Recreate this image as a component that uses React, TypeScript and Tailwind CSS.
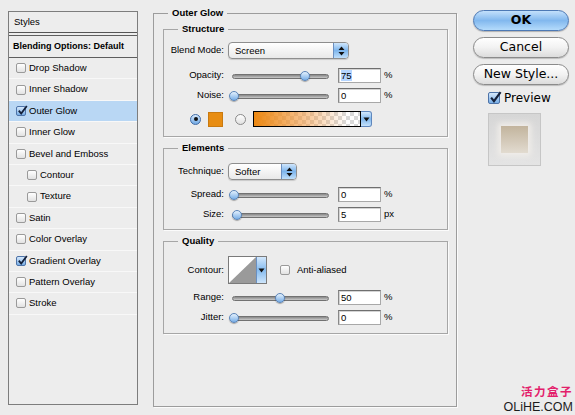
import React from "react";

function Check({ checked, big }: { checked?: boolean; big?: boolean }) {
  const size = big ? "w-[12px] h-[12px]" : "w-[10px] h-[10px]";
  if (checked) {
    return (
      <div className={`${size} shrink-0 rounded-[2px] border border-[#4d73a8] bg-linear-to-b from-[#d5e8fb] to-[#78aee6] relative`}>
        <svg width={big ? 13 : 11} height={big ? 13 : 11} viewBox="0 0 11 11" className="absolute -top-[2px] left-0">
          <path d="M1.8 5.6 L4.2 8.6 L9.8 1" fill="none" stroke="#14203a" strokeWidth="1.8" />
        </svg>
      </div>
    );
  }
  return <div className={`${size} shrink-0 rounded-[2px] border border-[#9a9a9a] bg-linear-to-b from-white to-[#e2e2e2]`} />;
}

function Radio({ on }: { on?: boolean }) {
  return on ? (
    <div className="w-[11px] h-[11px] shrink-0 rounded-full border border-[#3f6aa5] bg-linear-to-b from-[#d7eafc] to-[#6ea7e3] flex items-center justify-center">
      <div className="w-[4px] h-[4px] rounded-full bg-[#111]" />
    </div>
  ) : (
    <div className="w-[11px] h-[11px] shrink-0 rounded-full border border-[#8a8a8a] bg-linear-to-b from-white to-[#e0e0e0]" />
  );
}

function Slider({ x }: { x: number }) {
  return (
    <div className="relative w-[100px] h-[10px] shrink-0">
      <div className="absolute left-[3px] right-0 top-[3px] h-[5px] rounded-full border border-[#727272] bg-linear-to-b from-[#888888] to-[#c9c9c9]" />
      <div
        className="absolute top-0 w-[10px] h-[10px] rounded-full border border-[#5b85b9] bg-linear-to-b from-[#e4f1fd] to-[#78aee6] shadow-[0_1px_1px_rgba(0,0,0,0.3)]"
        style={{ left: x }}
      />
    </div>
  );
}

function Field({ v, sel }: { v: string; sel?: boolean }) {
  return (
    <div className="w-[43px] h-[15px] shrink-0 bg-white border border-[#a8a8a8] border-t-[#6f6f6f] border-l-[#888888] shadow-[inset_1px_1px_0_#d4d4d4] pl-[2px] flex items-center text-[9.5px] leading-[11px]">
      <span className={sel ? "bg-[#b5d5ff]" : ""}>{v}</span>
    </div>
  );
}

function UpDown() {
  return (
    <svg width="7" height="10" viewBox="0 0 7 10">
      <path d="M3.5 0.5 L6.5 4 L0.5 4 Z M0.5 6 L6.5 6 L3.5 9.5 Z" fill="#111" />
    </svg>
  );
}

function Down() {
  return (
    <svg width="7" height="5" viewBox="0 0 7 5">
      <path d="M0.5 0.5 L6.5 0.5 L3.5 4.5 Z" fill="#111" />
    </svg>
  );
}

function Popup({ w, text }: { w: string; text: string }) {
  return (
    <div className={`${w} h-[17px] shrink-0 flex rounded-[4px] border border-[#8e8e8e] bg-linear-to-b from-white to-[#e9e9e9] shadow-[0_1px_1px_rgba(0,0,0,0.15)]`}>
      <span className="flex-1 pl-[6px] text-[9.5px] leading-[15px]">{text}</span>
      <div className="w-[15px] rounded-r-[3px] border-l border-[#6b8fc0] bg-linear-to-b from-[#cfe6fc] via-[#7db5ec] to-[#bfdffb] flex items-center justify-center">
        <UpDown />
      </div>
    </div>
  );
}

function Row({ label, children, className }: { label: string; children: React.ReactNode; className: string }) {
  return (
    <div className={`flex items-center ${className}`}>
      <div className="w-[60px] shrink-0 text-right text-[9.5px]">{label}</div>
      {children}
    </div>
  );
}

function Group({ title, children, className }: { title: string; children: React.ReactNode; className: string }) {
  return (
    <div className={`border border-[#a6a6a6] shadow-[1px_1px_0_#fbfbfb] ${className}`}>
      <div className="-mt-[7px] ml-[14px] w-fit bg-[#ececec] px-[4px] text-[9.5px] font-bold leading-[12px]">{title}</div>
      {children}
    </div>
  );
}

const items: { l: string; c?: boolean; sel?: boolean; ind?: boolean }[] = [
  { l: "Drop Shadow" },
  { l: "Inner Shadow" },
  { l: "Outer Glow", c: true, sel: true },
  { l: "Inner Glow" },
  { l: "Bevel and Emboss" },
  { l: "Contour", ind: true },
  { l: "Texture", ind: true },
  { l: "Satin" },
  { l: "Color Overlay" },
  { l: "Gradient Overlay", c: true },
  { l: "Pattern Overlay" },
  { l: "Stroke" },
];

function AquaButton({ label, primary }: { label: string; primary?: boolean }) {
  return (
    <div
      className={
        primary
          ? "h-[21px] rounded-full border border-[#4d79b5] bg-linear-to-b from-[#c3e0fb] via-[#82b8ee] to-[#b4dbfb] shadow-[0_1px_1px_rgba(0,0,0,0.25)] flex items-center justify-center font-['DejaVu_Sans',sans-serif] text-[12.5px] font-bold"
          : "h-[21px] rounded-full border border-[#8b8b8b] bg-linear-to-b from-white via-[#f2f2f2] to-[#dcdcdc] shadow-[0_1px_1px_rgba(0,0,0,0.2)] flex items-center justify-center font-['DejaVu_Sans',sans-serif] text-[12.5px]"
      }
    >
      {label}
    </div>
  );
}

export default function App() {
  return (
    <div className="relative w-[575px] h-[415px] overflow-hidden bg-[#ececec] text-black font-['Liberation_Sans',Arial,sans-serif] flex items-start">
      {/* Left styles list */}
      <div className="mt-[11px] ml-[8px] w-[130px] h-[394px] border border-[#7d7d7d] bg-[#ededed] flex flex-col shrink-0">
        <div className="h-[21px] border-b border-[#555] flex items-center pl-[5px] text-[9.5px]">Styles</div>
        <div className="h-[2px]" />
        <div className="h-[23px] border-t border-b border-[#5e5e5e] flex items-center pl-[4px] text-[9px] font-bold">
          Blending Options: Default
        </div>
        {items.map((it) => (
          <div
            key={it.l}
            className={`h-[21.4px] flex items-center border-b border-[#f8f8f8] text-[9.5px] ${it.ind ? "pl-[18px]" : "pl-[7px]"} ${it.sel ? "bg-[#b9d7f4]" : ""}`}
          >
            <Check checked={it.c} />
            <span className="ml-[3px]">{it.l}</span>
          </div>
        ))}
      </div>

      {/* Middle settings */}
      <div className="ml-[15px] mt-[13px] w-[304px] h-[394px] shrink-0 border border-[#9c9c9c] shadow-[1px_1px_0_#fbfbfb] pl-[9px] pr-[8px]">
        <div className="-mt-[7px] ml-[5px] w-fit bg-[#ececec] px-[4px] text-[9.5px] font-bold leading-[12px]">Outer Glow</div>

        <Group title="Structure" className="mt-[10px] pb-[9px]">
          <Row label="Blend Mode:" className="mt-[7px]">
            <div className="ml-[4px]">
              <Popup w="w-[121px]" text="Screen" />
            </div>
          </Row>
          <Row label="Opacity:" className="mt-[9px]">
            <div className="ml-[5px]">
              <Slider x={71} />
            </div>
            <div className="ml-[9px]">
              <Field v="75" sel />
            </div>
            <span className="ml-[3px] text-[9.5px]">%</span>
          </Row>
          <Row label="Noise:" className="mt-[5px]">
            <div className="ml-[5px]">
              <Slider x={0} />
            </div>
            <div className="ml-[9px]">
              <Field v="0" />
            </div>
            <span className="ml-[3px] text-[9.5px]">%</span>
          </Row>
          <div className="mt-[8px] flex items-center pl-[26px] h-[16px]">
            <Radio on />
            <div className="ml-[7px] w-[15px] h-[15px] bg-[#e88d12] border border-[#c97a10]" />
            <div className="ml-[12px]">
              <Radio />
            </div>
            <div className="ml-[7px] flex h-[16px]">
              <div className="w-[108px] h-full border border-black bg-[image:linear-gradient(90deg,#ec8812_0%,rgba(242,150,60,0.6)_45%,rgba(255,255,255,0)_88%),repeating-conic-gradient(#ffffff_0_25%,#d9d9d9_0_50%)] bg-[length:100%_100%,8px_8px]" />
              <div className="w-[11px] h-full rounded-r-[3px] border border-l-0 border-[#5f87bd] bg-linear-to-b from-[#d3e8fc] via-[#80b7ec] to-[#c6e2fb] flex items-center justify-center">
                <Down />
              </div>
            </div>
          </div>
        </Group>

        <Group title="Elements" className="mt-[11px] pb-[7px]">
          <Row label="Technique:" className="mt-[9px]">
            <div className="ml-[4px]">
              <Popup w="w-[69px]" text="Softer" />
            </div>
          </Row>
          <Row label="Spread:" className="mt-[7px]">
            <div className="ml-[5px]">
              <Slider x={0} />
            </div>
            <div className="ml-[9px]">
              <Field v="0" />
            </div>
            <span className="ml-[3px] text-[9.5px]">%</span>
          </Row>
          <Row label="Size:" className="mt-[5px]">
            <div className="ml-[5px]">
              <Slider x={3} />
            </div>
            <div className="ml-[9px]">
              <Field v="5" />
            </div>
            <span className="ml-[3px] text-[9.5px]">px</span>
          </Row>
        </Group>

        <Group title="Quality" className="mt-[11px] pb-[8px]">
          <Row label="Contour:" className="mt-[9px]">
            <div className="ml-[4px] flex w-[39px] h-[28px] shrink-0 border border-[#7a7a7a]">
              <svg width="27" height="26" viewBox="0 0 27 26" className="block bg-white">
                <path d="M0 26 L27 0 L27 26 Z" fill="#9a9a9a" />
              </svg>
              <div className="flex-1 border-l border-[#6a90c2] bg-linear-to-b from-[#d3e8fc] via-[#86bbee] to-[#cde5fb] flex items-center justify-center">
                <Down />
              </div>
            </div>
            <div className="ml-[13px]">
              <Check />
            </div>
            <span className="ml-[7px] text-[9.5px]">Anti-aliased</span>
          </Row>
          <Row label="Range:" className="mt-[6px]">
            <div className="ml-[5px]">
              <Slider x={46} />
            </div>
            <div className="ml-[9px]">
              <Field v="50" />
            </div>
            <span className="ml-[3px] text-[9.5px]">%</span>
          </Row>
          <Row label="Jitter:" className="mt-[5px]">
            <div className="ml-[5px]">
              <Slider x={0} />
            </div>
            <div className="ml-[9px]">
              <Field v="0" />
            </div>
            <span className="ml-[3px] text-[9.5px]">%</span>
          </Row>
        </Group>
      </div>

      {/* Right buttons */}
      <div className="ml-[16px] mt-[10px] w-[96px] flex flex-col shrink-0">
        <AquaButton label="OK" primary />
        <div className="mt-[6px]">
          <AquaButton label="Cancel" />
        </div>
        <div className="mt-[6px]">
          <AquaButton label="New Style..." />
        </div>
        <div className="mt-[7px] ml-[15px] flex items-center h-[12px]">
          <Check checked big />
          <span className="ml-[4px] font-['DejaVu_Sans',sans-serif] text-[12px] leading-[12px]">Preview</span>
        </div>
        <div className="mt-[9px] ml-[15px] w-[53px] h-[53px] border border-[#c6c6c6] bg-linear-to-b from-[#d6d6d6] to-[#e4e4e4] flex items-center justify-center">
          <div className="w-[27px] h-[27px] bg-linear-to-b from-[#c2b49d] to-[#e2dbd0] shadow-[0_0_6px_3px_#f1eeea]" />
        </div>
      </div>

      {/* Watermark */}
      <div className="absolute right-[2px] top-[383px] flex flex-col items-end">
        <span className="font-['Noto_Sans_CJK_SC',sans-serif] text-[11.5px] leading-[17px] tracking-[1.5px] font-bold text-[#e3206b]">活力盒子</span>
        <span className="font-['Liberation_Sans',Arial,sans-serif] text-[12.5px] leading-[14.5px] text-[#1c1c1c]">OLiHE.COM</span>
      </div>
    </div>
  );
}
